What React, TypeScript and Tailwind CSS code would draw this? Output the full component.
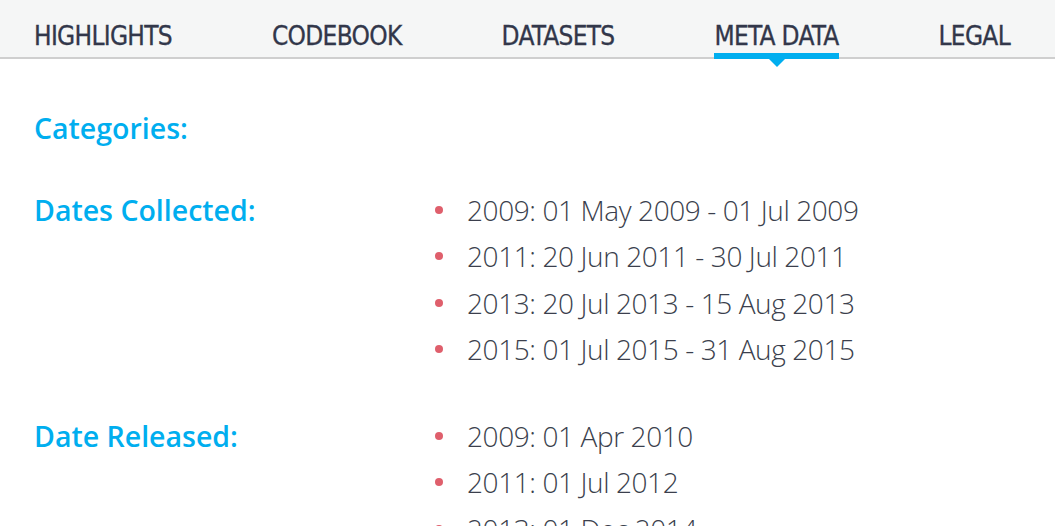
import React from "react";

const tabs = ["HIGHLIGHTS", "CODEBOOK", "DATASETS", "META DATA", "LEGAL"];

const sections: { label: string; items: string[]; mt: string }[] = [
  { label: "Categories:", items: [], mt: "mt-[46px]" },
  {
    label: "Dates Collected:",
    mt: "mt-[35px]",
    items: [
      "2009: 01 May 2009 - 01 Jul 2009",
      "2011: 20 Jun 2011 - 30 Jul 2011",
      "2013: 20 Jul 2013 - 15 Aug 2013",
      "2015: 01 Jul 2015 - 31 Aug 2015",
    ],
  },
  {
    label: "Date Released:",
    mt: "mt-[40px]",
    items: ["2009: 01 Apr 2010", "2011: 01 Jul 2012", "2013: 01 Dec 2014"],
  },
];

export default function App() {
  return (
    <div className="w-[1055px] h-[526px] overflow-hidden bg-white font-['Open_Sans',sans-serif]">
      {/* Tabs */}
      <nav className="h-[59px] bg-[#f5f6f6] border-b-2 border-[#cfcfcf] flex justify-between pl-[34px] pr-[45px] pt-[18px] font-['DejaVu_Sans_Condensed','DejaVu_Sans',sans-serif]">
        {tabs.map((t) => {
          const active = t === "META DATA";
          return (
            <div key={t} className="relative h-full">
              <span className="block text-[26px] leading-[36px] text-[#32374a] tracking-[-0.7px] [-webkit-text-stroke:0.3px_#32374a]">{t}</span>
              {active && (
                <>
                  <div className="absolute left-0 right-0 bottom-[-2px] h-[6px] bg-[#00aeef]" />
                  <div className="absolute left-1/2 -translate-x-1/2 bottom-[-10px] w-0 h-0 border-l-[8px] border-r-[8px] border-t-[8px] border-l-transparent border-r-transparent border-t-[#00aeef]" />
                </>
              )}
            </div>
          );
        })}
      </nav>

      {/* Meta data */}
      <div className="px-[34px]">
        {sections.map((s) => (
          <div key={s.label} className={`flex ${s.mt}`}>
            <div className="w-[400px] shrink-0 text-[28.5px] leading-[46.5px] font-semibold text-[#00aeef]">
              {s.label}
            </div>
            <ul className="flex flex-col">
              {s.items.map((it) => (
                <li key={it} className="flex items-center h-[46.5px]">
                  <span className="w-[8px] h-[8px] rounded-full bg-[#df5f6c] ml-[1px] mr-[24px]" />
                  <span className="text-[28px] leading-[46.5px] font-light text-[#3b3f4d] tracking-[-0.4px]">{it}</span>
                </li>
              ))}
            </ul>
          </div>
        ))}
      </div>
    </div>
  );
}
